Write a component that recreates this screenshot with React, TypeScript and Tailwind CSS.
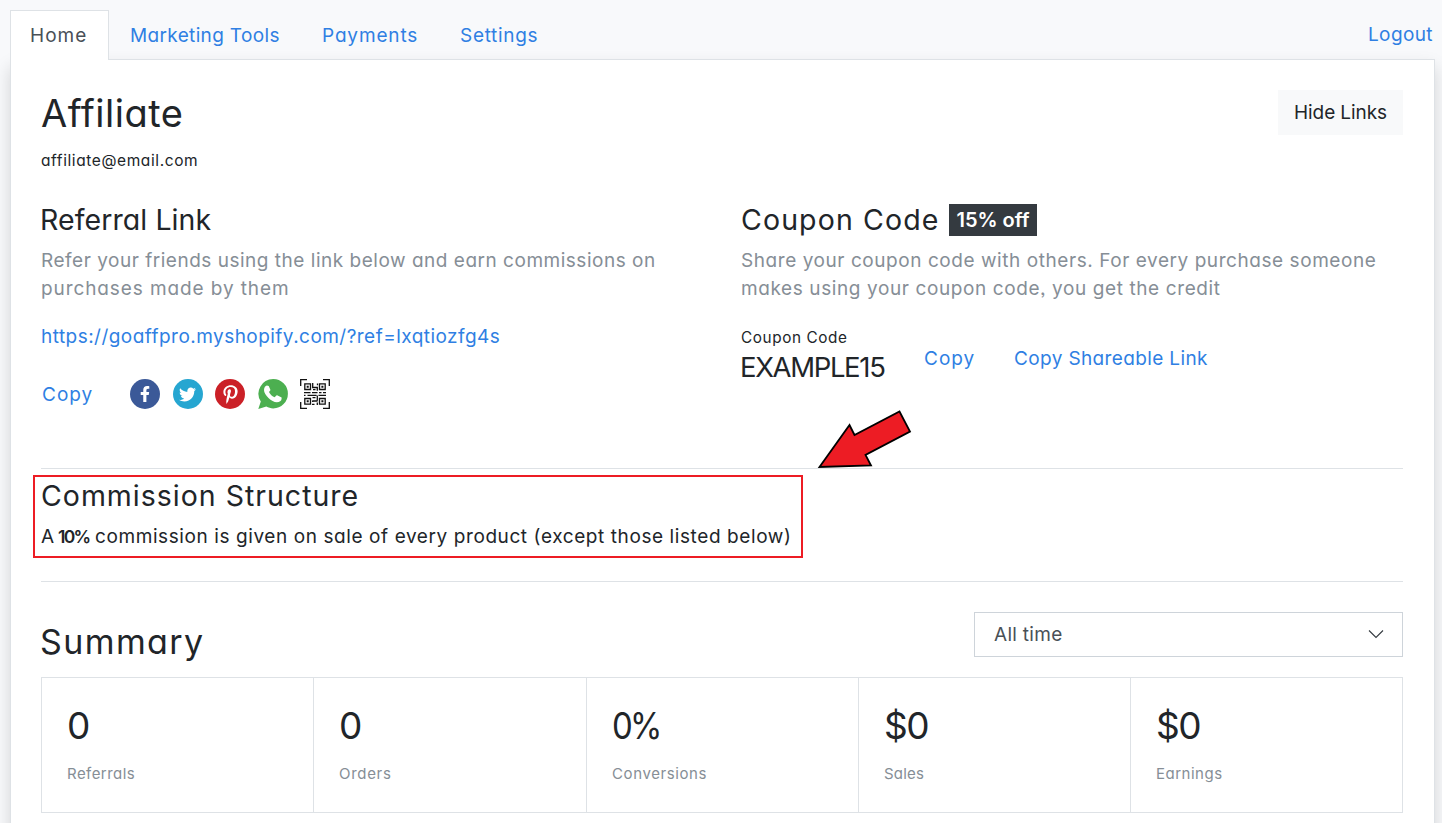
import type { ReactNode } from "react";
import { FaFacebookF, FaTwitter, FaPinterestP } from "react-icons/fa";

const stats = [
  { value: "0", label: "Referrals", valueTrack: "tracking-normal", track: "tracking-[0.450px]" },
  { value: "0", label: "Orders", valueTrack: "tracking-normal", track: "tracking-[0.700px]" },
  { value: "0%", label: "Conversions", valueTrack: "tracking-[-3px] [&>span]:inline-block [&>span]:origin-left [&>span]:scale-x-[0.89]", track: "tracking-[0.600px]" },
  { value: "$0", label: "Sales", valueTrack: "tracking-[-1.500px]", track: "tracking-[0.200px]" },
  { value: "$0", label: "Earnings", valueTrack: "tracking-[-1.500px]", track: "tracking-[0.500px]" },
];

function Round({ className, children }: { className: string; children: ReactNode }) {
  return (
    <span className={`flex h-[30px] w-[30px] items-center justify-center rounded-full text-white ${className}`}>
      {children}
    </span>
  );
}

function WhatsApp() {
  return (
    <svg viewBox="0 0 30 30" className="h-[30px] w-[30px]">
      <path d="M15.2 0A14.7 14.7 0 0 1 15.2 29.4C12.8 29.4 10.3 28.7 8.3 27.6L0.3 30L2.8 22.6A14.7 14.7 0 0 1 15.2 0Z" fill="#4caf50" />
      <path d="M8.900 6.600C7.500 6.700 6 8.500 6 10.900C6 15.600 13.700 23.200 18.800 23.200C21.400 23.200 23.600 21.700 23.600 19.700V18.500L19.100 16.200L18.300 16.400L16.700 18.300C14.500 17.700 11.800 15.200 11 13.100L12.400 11.300L12.300 10.500L10.700 6.900Z" fill="#fff" />
    </svg>
  );
}

function QrCode() {
  return (
    <svg viewBox="0 0 30 30" className="h-[30px] w-[30px]" fill="none" stroke="#111" strokeWidth="1.300">
      <path d="M7 .7H.7V7M23 .7h6.300V7M7 29.300H.7V23M23 29.300h6.300V23" />
      <path d="M4.800 4.800h5.700v5.700H4.800zM19.500 4.800h5.700v5.700h-5.700zM4.800 19.500h5.700v5.700H4.800zM19.500 19.500h5.700v5.700h-5.700z" />
      <path d="M6.700 7.650h2M21.400 7.650h2M6.700 22.350h2M21.400 22.350h2" strokeWidth="2" />
      <path d="M12.700 4v4.500h4M17.500 4.500v1.800M13 10.700h2.500M17.300 7.800v4M4 13.700h6.500M12 13.700h5.500M19 13.700h2.500M23 13.700h3M4 16.400h1.500M7.500 16.400h9M18.500 16.400h7.500M17.300 16.400v5.400M12.500 18.700h3M12.500 22h5M12.700 21.500v1.500M12 25.300h2.500M17.300 23.500v2.500" />
    </svg>
  );
}

export default function App() {
  return (
    <div className="h-[823px] w-[1442px] overflow-hidden bg-[#f8f9fb] font-['Inter','Open_Sans',sans-serif] text-[19px] font-normal text-[#212529] [font-feature-settings:'cv11','ss03'] [font-variant-ligatures:none]">
      <header className="flex h-[60px] items-end justify-between pl-[10px] pr-[9px] text-[#2f7fe3]">
        <nav className="z-10 flex h-[50px]">
          <a className="flex w-[99px] items-center border border-b-0 border-[#dee2e6] bg-white pt-px pl-[19px] tracking-[1.050px] text-[#495057]">Home</a>
          <a className="flex w-[192px] items-center pl-[21px] pt-0.5 tracking-[0.350px]">Marketing Tools</a>
          <a className="flex w-[138px] items-center pl-[21px] pt-0.5 tracking-[0.850px]">Payments</a>
          <a className="flex items-center pl-[21px] pt-0.5 tracking-[0.700px]">Settings</a>
        </nav>
        <a className="flex h-[51px] items-center pt-px tracking-[0.400px]">Logout</a>
      </header>

      <main className="relative ml-[10px] -mt-px h-[900px] w-[1425px] border border-[#dee2e6] bg-white pl-[30px] pr-[31px] shadow-[0_8px_16px_rgba(0,0,0,0.15)]">
        <div className="absolute -top-px left-0 h-px w-[97px] bg-white" />
        <section className="flex h-[129px] justify-between pt-[30px]">
          <div>
            <h1 className="h-[46px] text-[38px] leading-[46px] tracking-[0.500px]">Affiliate</h1>
            <p className="mt-[13px] text-[15.500px] leading-6 tracking-[0.600px]">affiliate@email.com</p>
          </div>
          <button className="h-[45px] w-[125px] bg-[#f8f9fa] pt-0.5 tracking-[-0.100px]">Hide Links</button>
        </section>

        <section className="flex h-[280px] border-b border-[#dee2e6] pt-[14px]">
          <div className="w-[700px]">
            <h2 className="-ml-px h-[34px] text-[28.500px] leading-[34px] tracking-[0.080px]">Referral Link</h2>
            <p className="mt-[10px] whitespace-nowrap leading-[28px] tracking-[0.515px] text-[#868e96]">Refer your friends using the link below and earn commissions on<br /><span className="tracking-[0.900px]">purchases made by them</span></p>
            <p className="mt-5 h-7 whitespace-nowrap leading-7 tracking-[0.460px] text-[#2f7fe3]">https://goaffpro.myshopify.com/?ref=lxqtiozfg4s</p>
            <div className="mt-[28px] flex h-[30px] items-center gap-[12.500px] text-[#2f7fe3]">
              <span className="w-[76.500px] pt-0.5 pl-px tracking-[1px]">Copy</span>
              <Round className="bg-[#3b5998]"><FaFacebookF className="h-4 w-4" /></Round>
              <Round className="bg-[#26a6d1]"><FaTwitter className="h-[17px] w-[17px]" /></Round>
              <Round className="bg-[#cb2027]"><FaPinterestP className="h-[19px] w-[19px]" /></Round>
              <WhatsApp />
              <QrCode />
            </div>
          </div>
          <div>
            <div className="flex h-[34px] items-center gap-[10px]">
              <h2 className="w-[198px] whitespace-nowrap text-[28.500px] leading-[34px] tracking-[1.120px]">Coupon Code</h2>
              <span className="flex h-8 w-[88px] items-center justify-center bg-[#343a40] text-[20px] font-semibold text-white">15% off</span>
            </div>
            <p className="mt-[10px] whitespace-nowrap leading-[28px] tracking-[0.560px] text-[#868e96]">Share your coupon code with others. For every purchase someone<br /><span className="tracking-[0.600px]">makes using your coupon code, you get the credit</span></p>
            <div className="mt-[24px] flex h-[56px] items-center text-[#2f7fe3]">
              <div className="w-[183px] text-[#212529]">
                <p className="text-[15.300px] leading-[22px] tracking-[0.600px]">Coupon Code</p>
                <p className="-ml-px h-[34px] text-[27.500px] leading-[37px] tracking-[-1.350px]">EXAMPLE15</p>
              </div>
              <span className="w-[90px] pt-2 tracking-[1px]">Copy</span>
              <span className="pt-2 tracking-[0.370px]">Copy Shareable Link</span>
            </div>
          </div>
        </section>

        <section className="h-[113px] border-b border-[#dee2e6] pt-[6px]">
          <div className="-ml-2 h-[83px] w-[770px] border-2 border-[#ed1c24] pl-[6px]">
            <h2 className="h-[38px] text-[28.500px] leading-[38px] tracking-[1px]">Commission Structure</h2>
            <p className="mt-[8px] whitespace-nowrap leading-7 tracking-[0.590px]"><span className="tracking-[-0.700px]">A </span><b className="inline-block w-[31px] text-[17.500px] font-semibold tracking-[-1.700px]">10%</b> commission is given on sale of every product (except those listed below)</p>
          </div>
        </section>

        <section>
          <div className="flex h-[95px] justify-between pt-[30px]">
            <h2 className="-ml-px text-[34px] leading-[60px] tracking-[1.400px]">Summary</h2>
            <div className="flex h-[45px] w-[429px] items-center justify-between border border-[#ced4da] pl-[19px] pr-[18px] text-[#495057]">
              <span className="pt-px tracking-[0.300px]">All time</span>
              <svg viewBox="0 0 16 10" className="mb-0.5 h-[10px] w-4" fill="none" stroke="#343a40" strokeWidth="1.100"><path d="M1 1.500l7 7 7-7" /></svg>
            </div>
          </div>
          <div className="grid h-[136px] grid-cols-[272px_273px_272px_272px_1fr] border border-[#dee2e6]">
            {stats.map((s) => (
              <div key={s.label} className="border-r border-[#dee2e6] pl-[25px] pt-[24px] last:border-r-0">
                <p className={`text-[37px] leading-[48px] ${s.valueTrack}`}><span>{s.value}</span></p>
                <p className={`mt-[13px] text-[15px] leading-[22px] text-[#868e96] ${s.track}`}>{s.label}</p>
              </div>
            ))}
          </div>
        </section>

        <svg viewBox="0 0 100 64" className="absolute left-[804px] top-[345px] h-16 w-[100px]">
          <path d="M4.500 62 L34.500 20 L39.500 30 L84.500 6.500 L95 26.500 L50.500 50 L56 60.500 Z" fill="#ed1c24" stroke="#000" strokeWidth="1.800" />
        </svg>
      </main>
    </div>
  );
}
